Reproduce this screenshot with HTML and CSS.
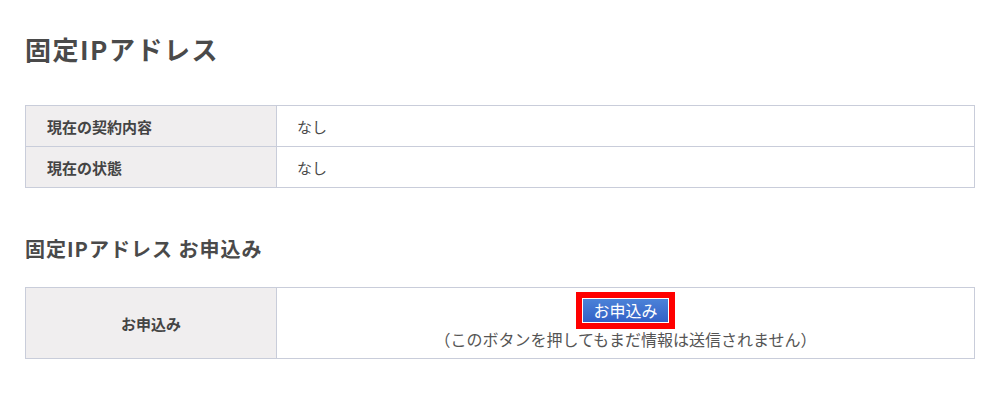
FILE: index.html
```html
<!DOCTYPE html>
<html lang="ja">
<head>
<meta charset="utf-8">
<title>固定IPアドレス</title>
<link rel="stylesheet" href="styles.css">
</head>
<body>
<main class="page">
  <h1 class="page-title">固定IPアドレス</h1>
  <table class="info-table">
    <tr>
      <th>現在の契約内容</th>
      <td>なし</td>
    </tr>
    <tr>
      <th>現在の状態</th>
      <td>なし</td>
    </tr>
  </table>
  <h2 class="section-title">固定IPアドレス お申込み</h2>
  <table class="info-table apply-table">
    <tr>
      <th>お申込み</th>
      <td>
        <div class="apply-cell">
          <button class="apply-btn" type="button">お申込み</button>
          <p class="note">（このボタンを押してもまだ情報は送信されません）</p>
        </div>
      </td>
    </tr>
  </table>
</main>
</body>
</html>
```
FILE: styles.css
```css
html, body {
  margin: 0;
  padding: 0;
  background: #ffffff;
}
body {
  font-family: "Noto Sans CJK JP", "Noto Sans", sans-serif;
  color: #4a4a4a;
}
.page {
  padding: 25px 25px 0 25px;
}
.page-title {
  margin: 0;
  padding-top: 6px;
  font-size: 26px;
  line-height: 36px;
  font-weight: bold;
  letter-spacing: 1.5px;
  color: #4a4a4a;
}
.info-table {
  width: 100%;
  border-collapse: collapse;
  margin-top: 38px;
  font-size: 15px;
}
.info-table th,
.info-table td {
  border: 1px solid #c9cdda;
  height: 40px;
  padding: 0;
  vertical-align: middle;
}
.info-table th {
  width: 229px;
  background: #f0eeef;
  text-align: left;
  padding-left: 21px;
  font-weight: bold;
  color: #444444;
}
.info-table td {
  padding-left: 20px;
  color: #4a4a4a;
}
.section-title {
  margin: 47px 0 0 0;
  font-size: 20px;
  line-height: 28px;
  font-weight: bold;
  letter-spacing: 1px;
  color: #4a4a4a;
}
.apply-table {
  margin-top: 24px;
}
.apply-table th {
  width: 250px;
  text-align: center;
  padding-left: 0;
  height: 70px;
}
.apply-table td {
  padding: 0;
}
.apply-cell {
  display: flex;
  flex-direction: column;
  align-items: center;
  padding-top: 8px;
  padding-bottom: 8px;
}
.apply-btn {
  font-family: inherit;
  font-size: 16px;
  line-height: 21px;
  color: #ffffff;
  padding: 1px 10px;
  border: 1px solid #ffffff;
  background: linear-gradient(#4b82d8, #3461c6);
  outline: 6px solid #ff0000;
  cursor: pointer;
}
.note {
  margin: 6px 0 0 0;
  font-size: 16px;
  line-height: 20px;
  color: #555555;
}
```
